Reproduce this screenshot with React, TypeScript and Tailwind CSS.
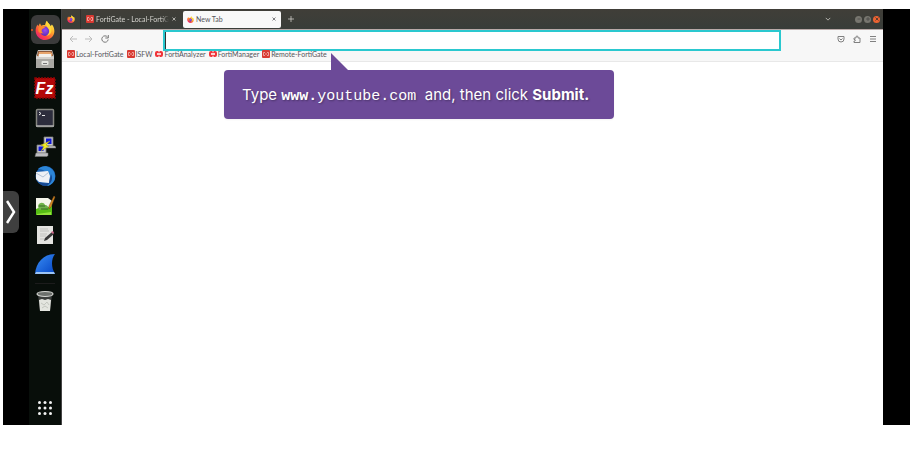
import { useId } from "react";
import type { ReactNode } from "react";

type IconProps = { className?: string };

function FirefoxIcon({ className }: IconProps) {
  const id = useId();
  return (
    <svg viewBox="0 0 32 32" className={className} aria-hidden="true">
      <defs>
        <linearGradient id={`${id}a`} x1="0.85" y1="0.1" x2="0.2" y2="0.95">
          <stop offset="0" stopColor="#fff04a" />
          <stop offset="0.35" stopColor="#ffa92c" />
          <stop offset="0.7" stopColor="#ff4f3c" />
          <stop offset="1" stopColor="#e81e7a" />
        </linearGradient>
        <radialGradient id={`${id}b`} cx="0.5" cy="0.4" r="0.6">
          <stop offset="0" stopColor="#9a4df0" />
          <stop offset="1" stopColor="#5b2bb8" />
        </radialGradient>
      </defs>
      <path
        d="M19 1c1 4 5 5 6 9l2-3c3 3 4 7 4 11 0 8-7 14-15 14S1 25 1 17c0-4 1-7 3-10l1 3c1-2 2-3 3-5l2 4c2-1 4-1 6-1 1-3 1-5 3-7z"
        fill={`url(#${id}a)`}
      />
      <circle cx="16" cy="18" r="7.500" fill={`url(#${id}b)`} />
      <path d="M6 12c4-3 8-2 10-1 0 2-4 2-5 4-1 3 0 5 3 6-3 1-6 0-8-2-1-2-1-5 0-7z" fill="#ff8a2a" />
      <path d="M19 1c1 4 6 6 7 12 2 7-3 12-8 12 5-3 6-8 3-12-3-3-4-7-2-12z" fill="#ffd83a" />
    </svg>
  );
}

function FilesIcon() {
  return (
    <svg viewBox="0 0 20 20" className="size-5" aria-hidden="true">
      <path d="M3 1h14l2 6v12H1V7z" fill="#c9c7c2" />
      <path d="M3 2h14l1 5H2z" fill="#8c5a3c" />
      <path d="M4 3h11l2 1v3H3z" fill="#e8a56c" />
      <path d="M4 5h12v3H4z" fill="#f3f1ec" />
      <rect x="1" y="8" width="18" height="11" rx="1" fill="#a9a8a3" />
      <path d="M1 8h18v2H1z" fill="#d2d0cb" />
      <rect x="6.500" y="12" width="7" height="4" rx="1" fill="#e5e5e0" />
      <path d="M8 14.500h4" stroke="#777" />
    </svg>
  );
}

function FileZillaIcon() {
  return (
    <svg viewBox="0 0 22 22" className="size-[22px]" aria-hidden="true">
      <rect x="1" y="1" width="20" height="20" fill="#b40808" stroke="#8d0505" strokeWidth="1.500" strokeDasharray="2 1" />
      <text
        x="10.500"
        y="17"
        textAnchor="middle"
        fill="#fff"
        fontFamily="Liberation Sans, sans-serif"
        fontSize="16"
        fontStyle="italic"
        fontWeight="700"
      >
        Fz
      </text>
    </svg>
  );
}

function TerminalIcon() {
  return (
    <svg viewBox="0 0 20 20" className="size-5" aria-hidden="true">
      <rect x="1.500" y="1.500" width="17" height="17" rx="1" fill="#2d2d3d" stroke="#85857f" strokeWidth="1.500" />
      <path d="M1 18h18" stroke="#aaa" strokeWidth="1.500" />
      <path d="M4 4l2 1.500L4 7M7 7.500h3" stroke="#e8e8e8" fill="none" />
    </svg>
  );
}

function PuttyIcon() {
  return (
    <svg viewBox="0 0 22 22" className="size-[22px]" aria-hidden="true">
      <path d="M10 1h9v9h-9zM3 9h9v8H3z" fill="#c8c8cc" stroke="#777" strokeWidth="0.800" />
      <path d="M12 2.500h5.500V8H12zM4.500 10.500h5V15h-5z" fill="#1118d8" />
      <path d="M9 10h12l1 2H9zM2 17h12v2.500l-1 1H1z" fill="#bdbdc0" stroke="#777" strokeWidth="0.500" />
      <path d="M16 5l-9 4 3 1.500-3 4.500 8-5-3-1z" fill="#f4ee24" stroke="#9c9520" strokeWidth="0.500" />
    </svg>
  );
}

function ThunderbirdIcon() {
  return (
    <svg viewBox="0 0 22 22" className="size-[22px]" aria-hidden="true">
      <circle cx="11.500" cy="11" r="10" fill="#1b5fae" />
      <path d="M4 4c5-5 13-3 16 3 3 7-1 13-7 14 4-4 4-8 1-12C11 5 7 4 4 4z" fill="#2c86d8" />
      <path d="M2 7l12-1 2 5-1 7-10-1-3-3z" fill="#eef1f5" />
      <path d="M2 8l7 4 6-5" fill="none" stroke="#b4c3d5" />
      <path d="M5 17c3 1 6 2 10 1l2-9c3 6-1 11-6 12-3 0-5-2-6-4z" fill="#174890" />
    </svg>
  );
}

function NotepadIcon() {
  return (
    <svg viewBox="0 0 22 22" className="size-[22px]" aria-hidden="true">
      <path d="M2 3h12l4 3v14H2z" fill="#f4f6ea" />
      <path d="M2 14c5-3 11 0 16-4v10H2z" fill="#57bd16" />
      <path d="M3 19l14-2v3H3z" fill="#93e43b" />
      <path d="M4 11c1-4 6-4 7-1 2 0 4 2 3 4l-9 1z" fill="#6fb34a" />
      <path d="M5 11h6M7 14h7" stroke="#3b6a28" />
      <path d="M20 1l1 1-4 10-2 2v-3z" fill="#d98b22" stroke="#7a4a16" strokeWidth="0.500" />
    </svg>
  );
}

function TextEditorIcon() {
  return (
    <svg viewBox="0 0 20 20" className="size-5" aria-hidden="true">
      <path d="M2 1h16v18H2z" fill="#e4e4e1" />
      <path d="M5 4h8M5 6h9M5 9h7M5 11h6M5 14h5" stroke="#b9b9b6" strokeWidth="0.800" />
      <path d="M17 7l2 2-7 6-3 1 1-3z" fill="#383838" />
      <path d="M16 7l2-1 1 2-1 1z" fill="#d56b8e" />
    </svg>
  );
}

function WiresharkIcon() {
  const id = useId();
  return (
    <svg viewBox="0 0 22 22" className="size-[22px]" aria-hidden="true">
      <defs>
        <linearGradient id={id} x1="0" y1="0" x2="1" y2="1">
          <stop offset="0" stopColor="#3b8ff5" />
          <stop offset="1" stopColor="#0545c4" />
        </linearGradient>
      </defs>
      <path d="M1 21C2 10 9 1 21 1c-4 5-4 13 0 20z" fill={`url(#${id})`} />
      <path d="M1 21l1-2h18l1 2z" fill="#9cc4f4" />
    </svg>
  );
}

function TrashIcon() {
  return (
    <svg viewBox="0 0 20 22" className="h-[22px] w-5" aria-hidden="true">
      <path d="M3 5h14l-2 16H5z" fill="#3c3f3d" />
      <path d="M4 10l3-1 3 1 3-1 3 1-1 11H5z" fill="#e3e5df" />
      <path d="M6 13l3 2 3-3 2 3M7 18l3-2 3 2" stroke="#c3c6bf" fill="none" />
      <ellipse cx="10" cy="4" rx="8" ry="2.500" fill="#6c706c" stroke="#d5d7d3" strokeWidth="1.200" />
    </svg>
  );
}

function GridIcon() {
  return (
    <svg viewBox="0 0 14 14" className="size-[14px]" fill="#f2f2f2" aria-hidden="true">
      {[1.5, 7, 12.5].map((y) => [1.5, 7, 12.5].map((x) => <circle key={`${x}-${y}`} cx={x} cy={y} r="1.500" />))}
    </svg>
  );
}

function FortiIcon({ wide = false }: { wide?: boolean }) {
  return wide ? (
    <svg viewBox="0 0 8 8" className="size-2 shrink-0" aria-hidden="true">
      <rect y="1" width="8" height="6" rx="2" fill="#f0343a" />
      <path d="M2 3.200h4v1.600H2zM3.500 1h1v1.200h-1zM3.500 5.800h1V7h-1z" fill="#fff" />
    </svg>
  ) : (
    <svg viewBox="0 0 8 8" className="size-2 shrink-0" aria-hidden="true">
      <rect width="8" height="8" rx="1" fill="#d93a32" />
      <path d="M3 2.500H1.500v3H3M5 2.500h1.500v3H5M3 4h2" fill="none" stroke="#f3b9b4" strokeWidth="0.800" />
    </svg>
  );
}

type StrokeIconProps = { className: string; children: ReactNode };

function StrokeIcon({ className, children }: StrokeIconProps) {
  return (
    <svg viewBox="0 0 8 8" className={className} fill="none" stroke="currentColor" aria-hidden="true">
      {children}
    </svg>
  );
}

const dockApps = [
  { name: "Files", icon: <FilesIcon /> },
  { name: "FileZilla", icon: <FileZillaIcon /> },
  { name: "Terminal", icon: <TerminalIcon /> },
  { name: "PuTTY", icon: <PuttyIcon /> },
  { name: "Thunderbird", icon: <ThunderbirdIcon /> },
  { name: "Notepad", icon: <NotepadIcon /> },
  { name: "Text Editor", icon: <TextEditorIcon /> },
  { name: "Wireshark", icon: <WiresharkIcon /> },
];

const bookmarks = [
  { name: "Local-FortiGate", wide: false },
  { name: "ISFW", wide: false },
  { name: "FortiAnalyzer", wide: true },
  { name: "FortiManager", wide: true },
  { name: "Remote-FortiGate", wide: false },
];

function Dock() {
  return (
    <nav aria-label="Dock" className="flex w-[33px] shrink-0 flex-col items-center border-r border-[#444] bg-[#080e0a] pt-1.5 pb-2.5">
      <div className="grid h-66 grid-rows-9 place-items-center">
        <button aria-label="Firefox" className="relative flex size-[29px] items-center justify-center rounded-md bg-[#3b3b3b]">
          <FirefoxIcon className="size-5" />
          <span className="absolute left-0 size-0.5 rounded-full bg-[#e95420]" />
        </button>
        {dockApps.map((app) => (
          <button key={app.name} aria-label={app.name}>
            {app.icon}
          </button>
        ))}
      </div>
      <div className="mt-1 h-px w-5 bg-[#1c1c1c]" />
      <button aria-label="Trash" className="mt-1.5">
        <TrashIcon />
      </button>
      <button aria-label="Show Applications" className="mt-auto">
        <GridIcon />
      </button>
    </nav>
  );
}

function TabBar() {
  return (
    <div className="flex h-5 items-center bg-gradient-to-b from-[#403e38] to-[#393d39] text-[7px] text-[#d5d3ce]">
      <button aria-label="Firefox View" className="flex h-full w-[19px] items-center justify-center border-r border-[#2f2f2b]">
        <FirefoxIcon className="size-2" />
      </button>
      <div className="flex h-full w-[102px] items-center gap-0.5 pr-1.5 pl-[5px]">
        <FortiIcon />
        <button className="min-w-0 flex-1 overflow-hidden mask-r-from-90% text-left whitespace-nowrap">FortiGate - Local-FortiGat</button>
        <button aria-label="Close FortiGate tab">
          <StrokeIcon className="size-1.5">
            <path d="M2 2l4 4M6 2L2 6" />
          </StrokeIcon>
        </button>
      </div>
      <div className="flex h-[17px] w-[98px] items-center gap-0.5 rounded-xs bg-[#f8f8f8] px-1 text-[#55555a]">
        <FirefoxIcon className="size-[7px]" />
        <button className="flex-1 text-left">New Tab</button>
        <button aria-label="Close New Tab">
          <StrokeIcon className="size-1.5">
            <path d="M2 2l4 4M6 2L2 6" />
          </StrokeIcon>
        </button>
      </div>
      <button aria-label="Open a new tab" className="ml-[7px]">
        <StrokeIcon className="size-1.5">
          <path d="M4 0v8M0 4h8" />
        </StrokeIcon>
      </button>
      <button aria-label="List all tabs" className="ml-auto">
        <StrokeIcon className="size-1.5">
          <path d="M1 2.500l3 3 3-3" />
        </StrokeIcon>
      </button>
      <div className="mr-[3px] ml-6 flex gap-0.5 text-[#303030]">
        <button aria-label="Minimize" className="flex size-[7px] items-center justify-center rounded-full bg-[#77766f]">
          <StrokeIcon className="size-1">
            <path d="M1 4h6" />
          </StrokeIcon>
        </button>
        <button aria-label="Maximize" className="flex size-[7px] items-center justify-center rounded-full bg-[#77766f]">
          <StrokeIcon className="size-1">
            <path d="M2 2h4v4H2z" />
          </StrokeIcon>
        </button>
        <button aria-label="Close" className="flex size-[7px] items-center justify-center rounded-full bg-[#ee6331]">
          <StrokeIcon className="size-1">
            <path d="M1 1l6 6M7 1L1 7" strokeWidth="1.500" />
          </StrokeIcon>
        </button>
      </div>
    </div>
  );
}

function Toolbar() {
  return (
    <div className="flex h-[22px] items-center border-t border-[#b9a9a7] text-[#808080]">
      <div className="flex w-[101px] shrink-0 items-center gap-2 pb-1 pl-[7px]">
        <button aria-label="Back" disabled className="text-[#bdbdbd]">
          <StrokeIcon className="size-2">
            <path d="M8 4H1M4 1L1 4l3 3" />
          </StrokeIcon>
        </button>
        <button aria-label="Forward" disabled className="text-[#bdbdbd]">
          <StrokeIcon className="size-2">
            <path d="M0 4h7M4 1l3 3-3 3" />
          </StrokeIcon>
        </button>
        <button aria-label="Reload" className="text-[#777]">
          <StrokeIcon className="size-2">
            <path d="M6.500 2A3.200 3.200 0 1 0 7.200 4.500M7.300 0v3H4.300" />
          </StrokeIcon>
        </button>
      </div>
      <input
        type="text"
        aria-label="Address"
        className="h-full min-w-0 flex-1 border-2 border-[#2ac8cf] bg-white px-1 text-xs text-black shadow-[inset_1px_0_0_#333] outline-none"
      />
      <div className="flex w-[102px] shrink-0 items-center justify-end gap-2 pr-1.5 pb-1">
        <button aria-label="Save to Pocket">
          <StrokeIcon className="size-2">
            <path d="M1 1.500h6V4a3 3 0 0 1-6 0zM2.500 3.500L4 5l1.500-1.500" />
          </StrokeIcon>
        </button>
        <button aria-label="Extensions">
          <StrokeIcon className="size-2">
            <path d="M1 3h2V2a1 1 0 0 1 2 0v1h2v4.500H1V6h1a1 1 0 0 0 0-1.500H1z" />
          </StrokeIcon>
        </button>
        <button aria-label="Menu">
          <StrokeIcon className="size-2">
            <path d="M1 1.500h6M1 4h6M1 6.500h6" />
          </StrokeIcon>
        </button>
      </div>
    </div>
  );
}

function Instruction() {
  return (
    <div className="absolute top-2 left-[162px] rounded-[4px] bg-[#6c4a98] py-3 pr-[25px] pl-[18px] font-[Inter,sans-serif] text-[15px] leading-[25px] whitespace-nowrap text-white shadow-xs text-shadow-[1px_1px_2px_#0005]">
      <svg viewBox="0 0 17 17" className="absolute bottom-full left-[107px] size-[17px]" aria-hidden="true">
        <path d="M0 0v17h17z" fill="#6c4a98" />
      </svg>
      <p>
        Type{" "}
        <code className="font-['Liberation_Mono',monospace] text-[15px] leading-none">
          <strong>www.</strong>youtube.com
        </code>
        &nbsp; and, then click <strong>Submit.</strong>
      </p>
    </div>
  );
}

export default function App() {
  return (
    <div className="h-screen bg-white pt-[9px] pr-[5px] pb-[26px] pl-[3px] font-[Lato,sans-serif]">
      <div className="relative flex h-full bg-black pr-[27px] pl-[26px]">
        <button
          aria-label="Open side panel"
          className="absolute top-[182px] left-0 flex h-[42px] w-4 items-center justify-center rounded-r-md bg-[#3f3f3f] text-white"
        >
          <svg viewBox="0 0 10 24" className="h-6 w-2.5" fill="none" stroke="currentColor" strokeWidth="2.500" aria-hidden="true">
            <path d="M1 1l7 11-7 11" />
          </svg>
        </button>
        <Dock />
        <section aria-label="Browser" className="flex min-w-0 flex-1 flex-col bg-white">
          <TabBar />
          <div className="border-b border-[#e8e8e8] bg-[#f7f7f7]">
            <Toolbar />
            <div className="flex h-2.5 items-center gap-[3px] px-[5px] pb-1 text-[7px] leading-none text-[#55555a]">
              {bookmarks.map((bookmark) => (
                <a key={bookmark.name} href="#" className="flex items-center gap-px whitespace-nowrap">
                  <FortiIcon wide={bookmark.wide} />
                  {bookmark.name}
                </a>
              ))}
            </div>
          </div>
          <main className="relative flex-1">
            <Instruction />
          </main>
        </section>
      </div>
    </div>
  );
}
